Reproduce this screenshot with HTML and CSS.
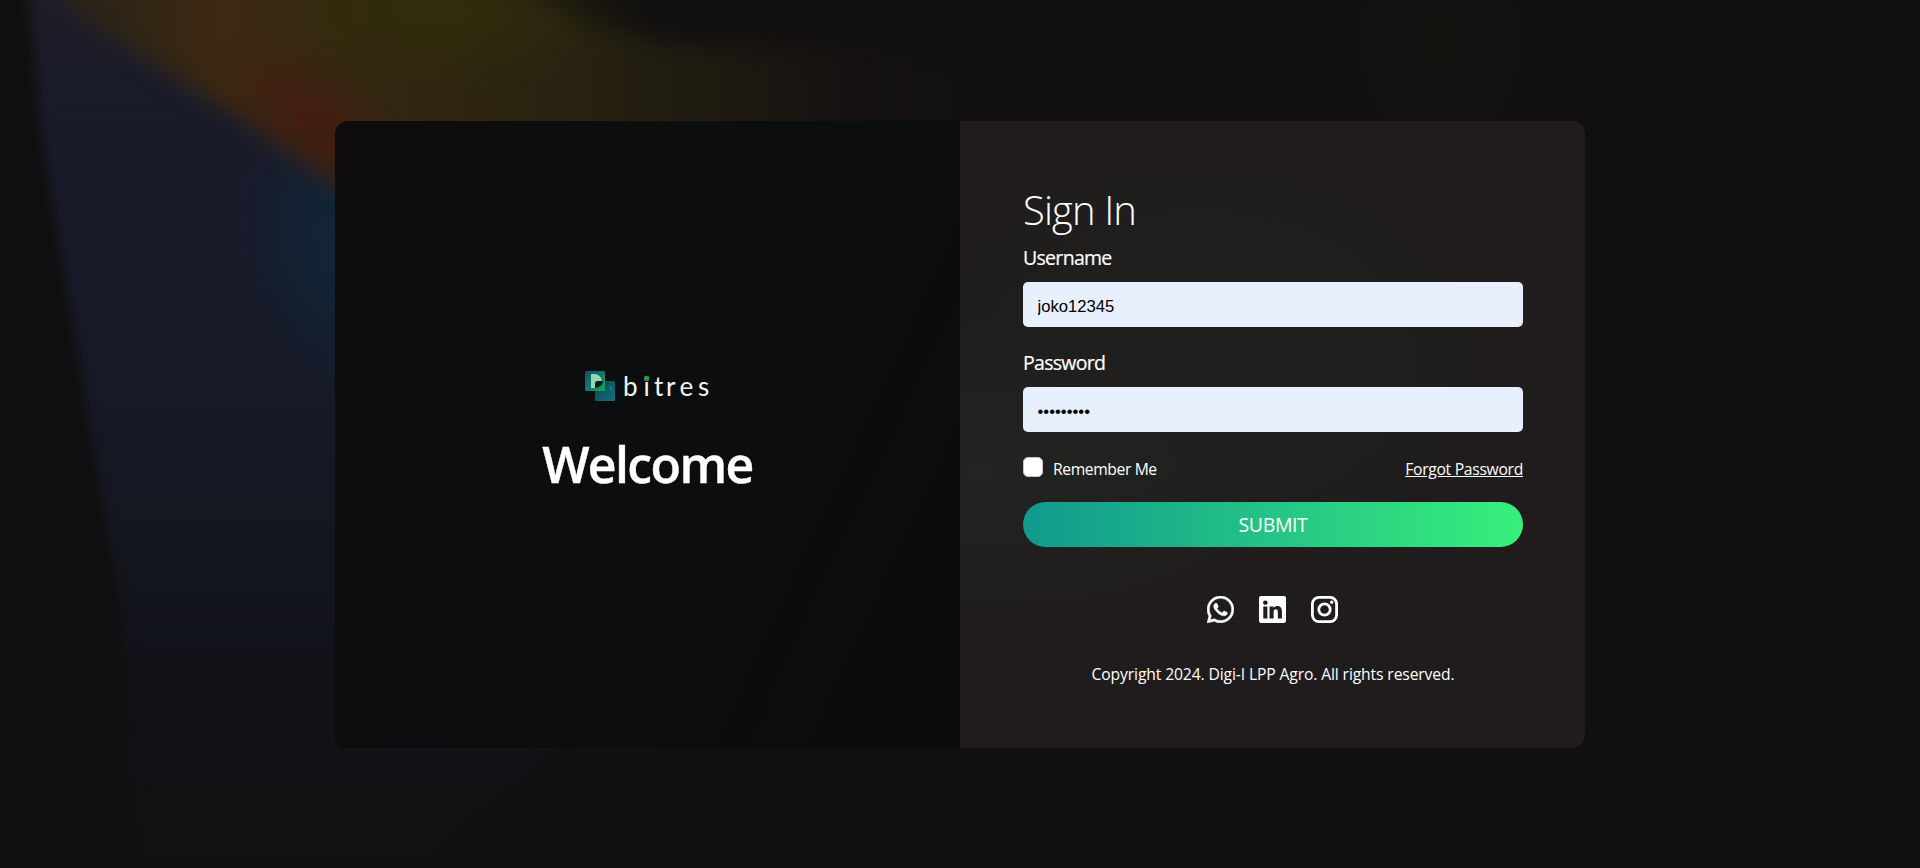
FILE: index.html
```html
<!DOCTYPE html>
<html lang="en">
<head>
<meta charset="utf-8">
<title>Sign In</title>
<link rel="stylesheet" href="styles.css">
</head>
<body>
<svg class="backdrop" viewBox="0 0 1920 868" preserveAspectRatio="none" aria-hidden="true">
  <defs>
    <filter id="soft" x="-20%" y="-20%" width="140%" height="140%" color-interpolation-filters="sRGB"><feGaussianBlur stdDeviation="11"/></filter>
    <filter id="edge" x="-20%" y="-20%" width="140%" height="140%" color-interpolation-filters="sRGB"><feGaussianBlur stdDeviation="6"/></filter>
    <linearGradient id="blue" x1="0" y1="0" x2="0" y2="1">
      <stop offset="0" stop-color="#1f1e28"/><stop offset=".18" stop-color="#191b2b"/>
      <stop offset=".5" stop-color="#161925"/><stop offset=".75" stop-color="#121319"/><stop offset="1" stop-color="#110f10"/>
    </linearGradient>
    <linearGradient id="warm" gradientUnits="userSpaceOnUse" x1="60" y1="0" x2="980" y2="0">
      <stop offset="0" stop-color="#282319"/><stop offset=".18" stop-color="#3c2911"/>
      <stop offset=".42" stop-color="#2f2610"/><stop offset=".62" stop-color="#231f10"/>
      <stop offset=".85" stop-color="#161211"/><stop offset="1" stop-color="#110f10"/>
    </linearGradient>
    <radialGradient id="red"><stop offset="0" stop-color="#451b12"/><stop offset="1" stop-color="#451b12" stop-opacity="0"/></radialGradient>
    <radialGradient id="olive"><stop offset="0" stop-color="#302d0c"/><stop offset="1" stop-color="#302d0c" stop-opacity="0"/></radialGradient>
    <radialGradient id="teal"><stop offset="0" stop-color="#10283a"/><stop offset="1" stop-color="#10283a" stop-opacity="0"/></radialGradient>
    <radialGradient id="moss"><stop offset="0" stop-color="#131310"/><stop offset="1" stop-color="#131310" stop-opacity="0"/></radialGradient>
  </defs>
  <polygon fill="url(#blue)" filter="url(#edge)" points="26,-30 42,133 63,267 88,417 121,614 136,900 400,900 600,700 600,360 400,190 100,0 80,-30"/>
  <ellipse fill="url(#teal)" cx="355" cy="235" rx="120" ry="170"/>
  <g filter="url(#soft)">
    <path fill="url(#warm)" d="M36-60 60 2 345 186 420 250 1000 250 1000 60 857 48 673 42 588 24 500-20 500-60Z"/>
    <ellipse fill="url(#olive)" cx="440" cy="10" rx="210" ry="80"/>
    <ellipse fill="url(#red)" cx="318" cy="124" rx="125" ry="55" transform="rotate(38 318 124)"/>
  </g>
  <ellipse fill="url(#moss)" cx="1440" cy="40" rx="120" ry="170"/>
</svg>
<main class="page">
  <div class="card">
    <section class="brand">
      <svg class="logo" viewBox="0 0 128 32" role="img" aria-label="bitres">
        <defs>
          <linearGradient id="sq1" x2="1" y2="1"><stop stop-color="#0f5263"/><stop offset=".5" stop-color="#16766f"/><stop offset="1" stop-color="#20a34d"/></linearGradient>
          <linearGradient id="sq2" y2="1"><stop stop-color="#0c4450"/><stop offset="1" stop-color="#14707f"/></linearGradient>
        </defs>
        <rect x="10" y="11" width="20" height="20" rx="1.5" fill="url(#sq2)"/>
        <rect x="0" y="1" width="20" height="20" rx="1.5" fill="url(#sq1)"/>
        <path d="M6 4h4q6 1 7 7h-4l-3 2v5H6Z" fill="#91d8ba"/>
        <path d="M10 18v-4q0-3 3-3h5q-1 6-8 7Z" fill="#071c1b"/>
        <path d="M26 16v5" stroke="#2b9a9c" stroke-width=".8"/>
        <text class="wordmark" x="38 58.4 69 81 94.5 113" y="26">bitres</text>
        <circle cx="61.6" cy="8.4" r="2.6" fill="#1f9b55"/>
      </svg>
      <h1 class="welcome">Welcome</h1>
    </section>
    <form class="signin">
      <h2 class="title">Sign In</h2>
      <label class="label" for="user">Username</label>
      <input class="field" id="user" type="text" value="joko12345">
      <label class="label label-pass" for="pass">Password</label>
      <input class="field" id="pass" type="password" value="password1">
      <div class="options">
        <label class="remember"><input class="check" type="checkbox"><span>Remember Me</span></label>
        <a class="forgot" href="#">Forgot Password</a>
      </div>
      <button class="submit" type="button">SUBMIT</button>
      <div class="social">
        <svg viewBox="0 0 16 16"><path d="M13.601 2.326A7.854 7.854 0 0 0 7.994 0C3.627 0 .068 3.558.064 7.926c0 1.399.366 2.76 1.057 3.965L0 16l4.204-1.102a7.933 7.933 0 0 0 3.79.965h.004c4.368 0 7.926-3.558 7.93-7.93A7.898 7.898 0 0 0 13.6 2.326zM7.994 14.521a6.573 6.573 0 0 1-3.356-.92l-.24-.144-2.494.654.666-2.433-.156-.251a6.56 6.56 0 0 1-1.007-3.505c0-3.626 2.957-6.584 6.591-6.584a6.56 6.56 0 0 1 4.66 1.931 6.557 6.557 0 0 1 1.928 4.66c-.004 3.639-2.961 6.592-6.592 6.592zm3.615-4.934c-.197-.099-1.17-.578-1.353-.646-.182-.065-.315-.099-.445.099-.133.197-.513.646-.627.775-.114.133-.232.148-.43.05-.197-.1-.836-.308-1.592-.985-.59-.525-.985-1.175-1.103-1.372-.114-.198-.011-.304.088-.403.087-.088.197-.232.296-.346.1-.114.133-.198.198-.33.065-.134.034-.248-.015-.347-.05-.099-.445-1.076-.612-1.47-.16-.389-.323-.335-.445-.34-.114-.007-.247-.007-.38-.007a.729.729 0 0 0-.529.247c-.182.198-.691.677-.691 1.654 0 .977.71 1.916.81 2.049.098.133 1.394 2.132 3.383 2.992.47.205.84.326 1.129.418.475.152.904.129 1.246.08.38-.058 1.171-.48 1.338-.943.164-.464.164-.86.114-.943-.049-.084-.182-.133-.38-.232z" stroke="#fff" stroke-width=".3"/></svg>
        <svg viewBox="0 0 16 16"><path d="M0 1.146C0 .513.526 0 1.175 0h13.65C15.474 0 16 .513 16 1.146v13.708c0 .633-.526 1.146-1.175 1.146H1.175C.526 16 0 15.487 0 14.854V1.146zm4.943 12.248V6.169H2.542v7.225h2.401zm-1.2-8.212c.837 0 1.358-.554 1.358-1.248-.015-.709-.52-1.248-1.342-1.248-.822 0-1.359.54-1.359 1.248 0 .694.521 1.248 1.327 1.248h.016zm4.908 8.212V9.359c0-.216.016-.432.08-.586.173-.431.568-.878 1.232-.878.869 0 1.216.662 1.216 1.634v3.865h2.401V9.25c0-2.22-1.184-3.252-2.764-3.252-1.274 0-1.845.7-2.165 1.193v.025h-.016a5.54 5.54 0 0 1 .016-.025V6.169h-2.4c.03.678 0 7.225 0 7.225h2.4z"/></svg>
        <svg viewBox="0 0 16 16"><g fill="none" stroke="#fff" stroke-width="1.65"><rect x=".83" y=".83" width="14.34" height="14.34" rx="3.9"/><circle cx="8" cy="8" r="3.39"/></g><circle cx="12.27" cy="3.73" r="1"/></svg>
      </div>
      <p class="copyright">Copyright 2024. Digi-I LPP Agro. All rights reserved.</p>
    </form>
  </div>
</main>
</body>
</html>
```
FILE: styles.css
```css
* { box-sizing: border-box; }
body {
  margin: 0;
  background: #110f10;
  color: #fff;
  font-family: "Open Sans", "Noto Sans", sans-serif;
  overflow: hidden;
}
.backdrop { position: absolute; inset: 0; width: 100%; height: 100%; z-index: -1; }
.page { height: 868px; display: flex; align-items: center; justify-content: center; }
.card {
  width: 1250px;
  height: 627px;
  display: grid;
  grid-template-columns: 1fr 1fr;
  border-radius: 13px;
  overflow: hidden;
}
.brand {
  display: flex;
  flex-direction: column;
  align-items: center;
  padding-top: 249px;
  background: linear-gradient(115deg, #0e0c0d 20%, #0c0d0e 40%, #0c0d0d 65%, #0e0b0c 85%);
}
.logo { width: 128px; height: 32px; margin-left: 2px; }
.wordmark { font-family: Lato, sans-serif; font-size: 26px; fill: #f2f4f4; }
.welcome { margin: 28px 0 0; font-size: 50px; line-height: 68px; font-weight: 600; letter-spacing: -1.6px; -webkit-text-stroke: .4px #fff; }
.signin {
  display: flex;
  flex-direction: column;
  padding: 62px 62px 0 63px;
  background:
    radial-gradient(ellipse 330px 150px at 20px 350px, rgba(34, 39, 34, .7), transparent),
    radial-gradient(ellipse 420px 300px at 240px 240px, rgba(32, 32, 30, .6), transparent),
    #201c1d;
}
.title { margin: 0; font-size: 40px; line-height: 54px; font-weight: 300; letter-spacing: -0.9px; }
.label { margin-top: 7px; height: 38px; font-size: 19.5px; line-height: 27px; letter-spacing: -0.7px; -webkit-text-stroke: .2px #fff; }
.label-pass { margin-top: 22px; }
.field {
  width: 500px;
  height: 45px;
  padding: 5px 15px 0 14.5px;
  border: 0;
  border-radius: 5px;
  background: #e8f0fe;
  color: #000;
  font: 16.67px "Liberation Sans", Arial, sans-serif;
}
.options { display: flex; justify-content: space-between; align-items: flex-start; height: 70px; padding-top: 25px; font-size: 15.7px; line-height: 25px; }
.remember { display: flex; gap: 10px; letter-spacing: -0.4px; }
.check { appearance: none; width: 20px; height: 20px; margin: 0; border: 1px solid #c4c4c4; border-radius: 5px; background: #fff; }
.forgot { color: #fff; letter-spacing: -0.3px; text-underline-offset: 1px; }
.submit {
  height: 45px;
  border: 0;
  border-radius: 23px;
  background: linear-gradient(to right, #11998e, #38ef7d);
  color: #fff;
  font: 19.5px "Open Sans", sans-serif;
  letter-spacing: -0.4px;
}
.social { display: flex; justify-content: center; gap: 25px; margin: 49px 1px 0 0; }
.social svg { width: 27px; height: 27px; fill: #fff; }
.copyright { margin: 38px 0 0; text-align: center; font-size: 15.7px; line-height: 26px; letter-spacing: -0.13px; white-space: nowrap; }
```
